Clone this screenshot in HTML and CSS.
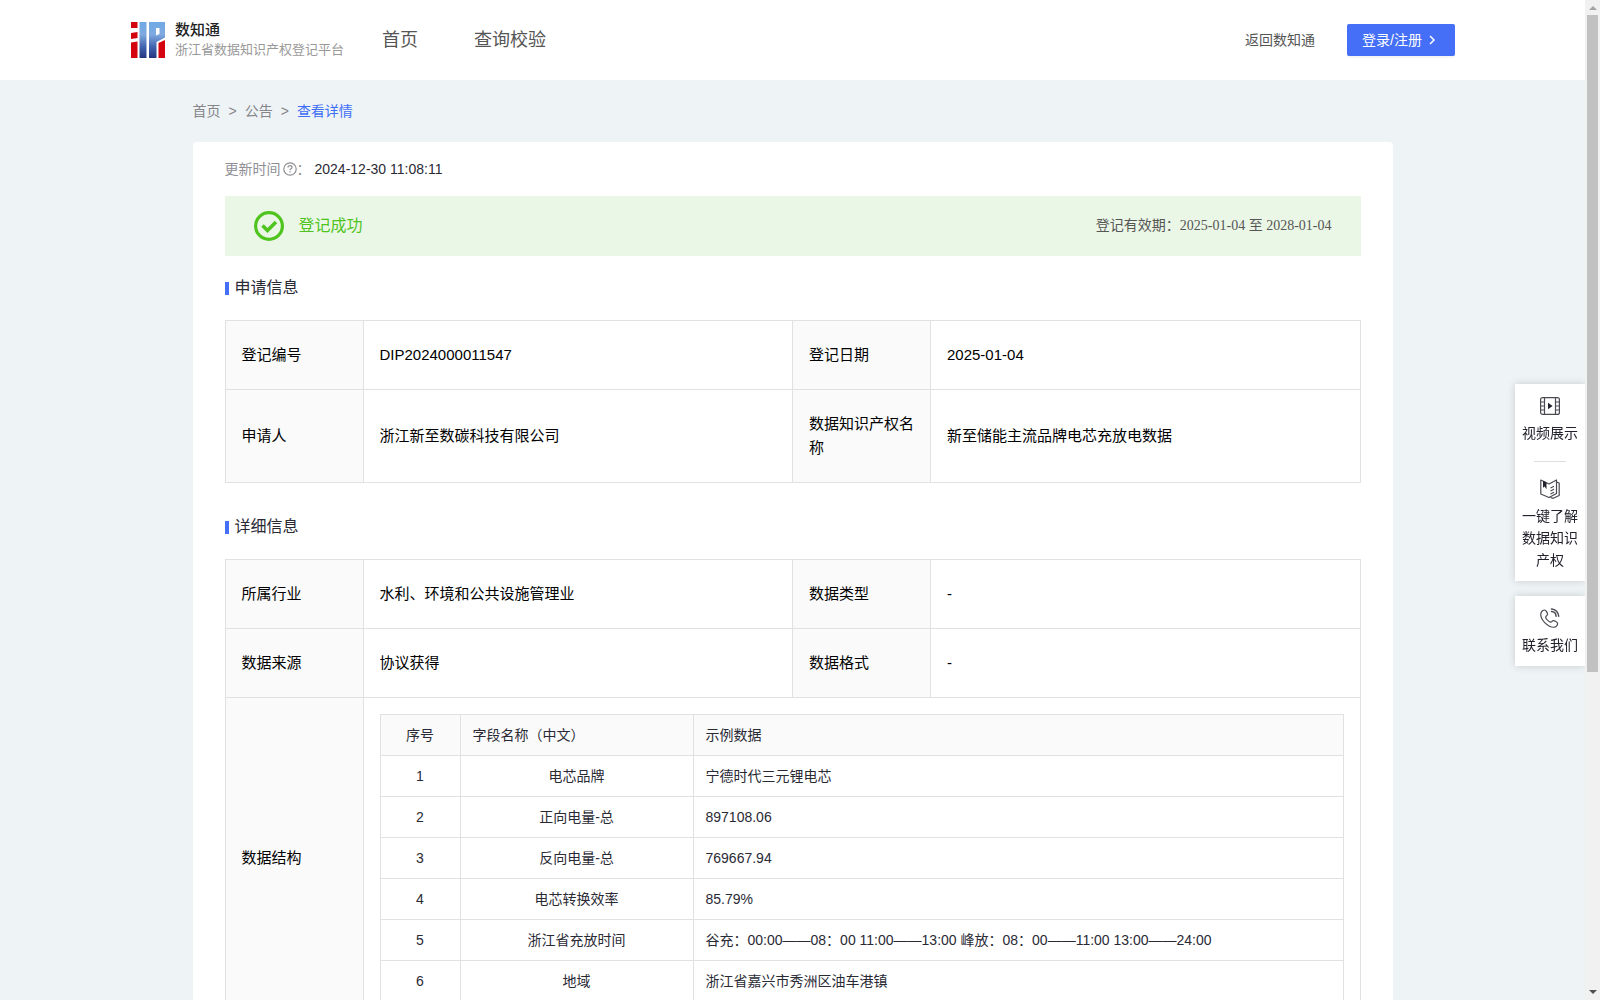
FILE: index.html
```html
<!DOCTYPE html>
<html lang="zh-CN">
<head>
  <meta charset="UTF-8">
  <meta name="viewport" content="width=device-width, initial-scale=1.0">
  <title>浙江省数据知识产权登记平台</title>
  <link rel="stylesheet" href="styles.css">
</head>
<body>
  <header class="header">
    <a class="logo" href="#">
      <svg class="logo-icon" width="34" height="36" viewBox="0 0 34 36">
        <defs>
          <linearGradient id="logoBlue" x1="0" y1="0" x2="0" y2="36" gradientUnits="userSpaceOnUse">
            <stop offset="0" stop-color="#6faae6"/>
            <stop offset="0.35" stop-color="#7fa9df"/>
            <stop offset="0.7" stop-color="#3f62ae"/>
            <stop offset="1" stop-color="#25357f"/>
          </linearGradient>
        </defs>
        <path fill="#d3040f" d="M0 0h6.500v6H0zM0 11l6.500-1v6L0 17zM0 20.500l6.500-1V36H0zM27.500 21l6.500-3v18h-6.500z"/>
        <path fill="url(#logoBlue)" d="M8.500 0h7v36h-7z"/>
        <path fill="url(#logoBlue)" fill-rule="evenodd" d="M18 0h16v15.500L25.500 20v16H18zM25 6v7.500l3.500-1.500V6z"/>
      </svg>
      <span class="logo-text">
        <strong class="logo-name">数知通</strong>
        <span class="logo-desc">浙江省数据知识产权登记平台</span>
      </span>
    </a>
    <nav class="nav">
      <a href="#">首页</a>
      <a href="#">查询校验</a>
    </nav>
    <div class="header-right">
      <a class="back-link" href="#">返回数知通</a>
      <button class="login-btn" type="button">
        登录/注册
        <svg width="12" height="12" viewBox="0 0 12 12"><path d="M4 2l4 4-4 4" fill="none" stroke="#fff" stroke-width="1.5"/></svg>
      </button>
    </div>
  </header>

  <main class="container">
    <nav class="breadcrumb">
      <a href="#">首页</a>
      <span>&gt;</span>
      <a href="#">公告</a>
      <span>&gt;</span>
      <a class="current" href="#">查看详情</a>
    </nav>

    <div class="card">
      <div class="update-time">
        <span class="label">更新时间</span>
        <svg width="14" height="14" viewBox="0 0 14 14" fill="none" stroke="#8f8f94" stroke-width="1.2">
          <circle cx="7" cy="7" r="6.2"/>
          <path d="M5 5.6c0-1.2.9-1.9 2-1.9s2 .7 2 1.7c0 1.3-2 1.4-2 2.8M7 9.3v1.3"/>
        </svg>
        <span class="label">：</span>
        <span class="time">2024-12-30 11:08:11</span>
      </div>

      <div class="status-bar">
        <svg width="32" height="32" viewBox="0 0 32 32" fill="none" stroke="#50c41e">
          <circle cx="16" cy="16" r="13.4" stroke-width="3.2"/>
          <path d="M9.5 15.5l5 5 8.5-8.5" stroke-width="3.6"/>
        </svg>
        <span class="status-text">登记成功</span>
        <span class="valid-date">登记有效期：2025-01-04 至 2028-01-04</span>
      </div>

      <h2 class="title">申请信息</h2>
      <table class="info-table">
        <colgroup><col class="col-label"><col><col class="col-label"><col></colgroup>
        <tr>
          <th>登记编号</th>
          <td>DIP2024000011547</td>
          <th>登记日期</th>
          <td>2025-01-04</td>
        </tr>
        <tr>
          <th>申请人</th>
          <td>浙江新至数碳科技有限公司</td>
          <th>数据知识产权名称</th>
          <td>新至储能主流品牌电芯充放电数据</td>
        </tr>
      </table>

      <h2 class="title title-next">详细信息</h2>
      <table class="info-table">
        <colgroup><col class="col-label"><col><col class="col-label"><col></colgroup>
        <tr>
          <th>所属行业</th>
          <td>水利、环境和公共设施管理业</td>
          <th>数据类型</th>
          <td>-</td>
        </tr>
        <tr>
          <th>数据来源</th>
          <td>协议获得</td>
          <th>数据格式</th>
          <td>-</td>
        </tr>
        <tr>
          <th>数据结构</th>
          <td class="nested" colspan="3">
            <table class="data-table">
              <colgroup><col class="col-no"><col class="col-name"><col></colgroup>
              <thead>
                <tr><th>序号</th><th>字段名称（中文）</th><th>示例数据</th></tr>
              </thead>
              <tbody>
                <tr><td>1</td><td>电芯品牌</td><td>宁德时代三元锂电芯</td></tr>
                <tr><td>2</td><td>正向电量-总</td><td>897108.06</td></tr>
                <tr><td>3</td><td>反向电量-总</td><td>769667.94</td></tr>
                <tr><td>4</td><td>电芯转换效率</td><td>85.79%</td></tr>
                <tr><td>5</td><td>浙江省充放时间</td><td>谷充：00:00——08：00 11:00——13:00 峰放：08：00——11:00 13:00——24:00</td></tr>
                <tr><td>6</td><td>地域</td><td>浙江省嘉兴市秀洲区油车港镇</td></tr>
              </tbody>
            </table>
          </td>
        </tr>
      </table>
    </div>
  </main>

  <aside class="side">
    <div class="side-box">
      <button class="side-item" type="button">
        <svg width="20" height="20" viewBox="0 0 20 20" fill="none" stroke="#4a4a52" stroke-width="1.2">
          <rect x="0.6" y="1.6" width="18.8" height="16.8" rx="2"/>
          <path d="M4.5 1.6v16.8M15.5 1.6v16.8M.6 6h3.9M.6 10h3.9M.6 14h3.9M15.5 6h3.9M15.5 10h3.9M15.5 14h3.9"/>
          <path d="M8 6.8v6.4l4.6-3.2z" fill="#22222c" stroke="none"/>
        </svg>
        视频展示
      </button>
      <span class="line"></span>
      <button class="side-item" type="button">
        <svg width="20" height="20" viewBox="0 0 20 20" fill="none" stroke="#4a4a52" stroke-width="1.2" stroke-linejoin="round">
          <path d="M.8 1l8.200 4 7.500-4v13.500L9 18.500.8 15z"/>
          <path d="M16.500 3.200l2.700.8v12.500l-6 2.800-2.700-.8"/>
          <path d="M10.500 9l3.500-1.700M10.500 12l3.500-1.700M10.500 15l3.500-1.700"/>
          <path d="M3 1.800v7l1.600-1.300 1.900 2.700V3.500z" fill="#22222c" stroke="none"/>
        </svg>
        一键了解数据知识产权
      </button>
    </div>
    <div class="side-box">
      <button class="side-item" type="button">
        <svg width="20" height="20" viewBox="0 0 20 20" fill="none" stroke="#4a4a52" stroke-width="1.2" stroke-linecap="round" stroke-linejoin="round">
          <path d="M5.2 2.2C3.9 1.5 1.6 3 1 5c-.8 3 1.400 7.200 4 9.800s6.400 4.800 9.400 4.400c2-.4 3.700-2.600 3-4.200-.7-1.400-3-2.600-4.100-2.400-1.300.2-1.500 1.900-2.900 1.500C8.500 13.500 6 11 5.700 9.300c-.2-1.400 1.600-1.500 1.800-2.800.1-1.200-1.200-3.700-2.300-4.300z"/>
          <path d="M11.500 1c4 .2 7 3.200 7.200 7.200M11.500 3.600c2.600.2 4.400 2 4.600 4.600" stroke-width="1.5"/>
        </svg>
        联系我们
      </button>
    </div>
  </aside>

  <div class="scrollbar" aria-hidden="true">
    <i class="arrow-up"></i>
    <i class="thumb"></i>
    <i class="arrow-down"></i>
  </div>
</body>
</html>
```

FILE: styles.css
```css
* {
  box-sizing: border-box;
}

body {
  margin: 0;
  padding-right: 15px;
  background: #eef3f6;
  color: #2a2a35;
  font-family: "Liberation Sans", "Noto Sans CJK SC", sans-serif;
  font-size: 14px;
  line-height: 22px;
}

a {
  color: inherit;
  text-decoration: none;
}

button {
  border: none;
  font-family: inherit;
  font-size: 14px;
  line-height: 22px;
  cursor: pointer;
}

/* header */
.header {
  display: flex;
  align-items: center;
  height: 80px;
  padding: 0 130px 0 131px;
  background: #fff;
  color: #555;
}

.logo {
  display: flex;
  align-items: center;
  gap: 10px;
}

.logo-text {
  display: flex;
  flex-direction: column;
}

.logo-name {
  color: #222;
  font-size: 15px;
  font-weight: 500;
  line-height: 20px;
}

.logo-desc {
  color: #999;
  font-size: 13px;
  line-height: 20px;
}

.nav {
  display: flex;
  gap: 56px;
  margin-left: 38px;
  font-size: 18px;
}

.header-right {
  display: flex;
  align-items: center;
  gap: 32px;
  margin-left: auto;
}

.login-btn {
  display: flex;
  align-items: center;
  gap: 4px;
  height: 32px;
  padding: 0 17px 0 15px;
  border-radius: 2px;
  background: #446ff6;
  box-shadow: 0 2px 0 rgba(0, 0, 0, 0.04);
  color: #fff;
}

/* content */
.container {
  max-width: 1200px;
  margin: 0 auto;
}

.breadcrumb {
  display: flex;
  align-items: center;
  gap: 8px;
  height: 62px;
  color: #86868a;
}

.breadcrumb .current {
  color: #3f6ef6;
}

.card {
  padding: 0 32px 32px;
  border-radius: 4px;
  background: #fff;
}

.update-time {
  display: flex;
  align-items: center;
  height: 54px;
}

.update-time .label {
  color: #8f8f94;
}

.update-time svg {
  margin-left: 2px;
}

.update-time .time {
  margin-left: 4px;
}

.status-bar {
  display: flex;
  align-items: center;
  height: 60px;
  padding: 0 29px 0 28px;
  background: #ebf7e6;
}

.status-text {
  margin-left: 14px;
  color: #50c41e;
  font-size: 16px;
}

.valid-date {
  margin-left: auto;
  color: #555;
  font-family: "Liberation Serif", "Noto Sans CJK SC", serif;
}

.title {
  display: flex;
  align-items: center;
  gap: 6px;
  height: 64px;
  margin: 0;
  font-size: 16px;
  font-weight: 400;
}

.title::before {
  content: "";
  width: 4px;
  height: 13px;
  background: #446ff6;
}

.title-next {
  margin-top: 12px;
}

/* tables */
table {
  width: 100%;
  border-collapse: collapse;
  table-layout: fixed;
}

th,
td {
  border: 1px solid #e1e1e1;
  font-weight: 400;
  text-align: left;
}

th {
  background: #fafafa;
}

.info-table {
  color: #000;
  font-size: 15px;
  line-height: 24px;
}

.info-table th,
.info-table td {
  padding: 22px 16px;
}

.col-label {
  width: 138px;
}

.info-table .nested {
  padding: 16px;
}

.data-table {
  color: #2a2a35;
  font-size: 14px;
  line-height: 22px;
}

.info-table .data-table th,
.info-table .data-table td {
  padding: 9px 12px;
}

.col-no {
  width: 80px;
}

.col-name {
  width: 233px;
}

.data-table th:first-child,
.data-table td:first-child,
.data-table td:nth-child(2) {
  text-align: center;
}

/* floating tools */
.side {
  position: fixed;
  top: 384px;
  right: 15px;
  display: flex;
  flex-direction: column;
  gap: 15px;
  width: 70px;
}

.side-box {
  display: flex;
  flex-direction: column;
  align-items: center;
  padding: 12px 0 10px;
  background: #fff;
  box-shadow: 0 0 8px rgba(0, 0, 0, 0.16);
}

.side-item {
  display: flex;
  flex-direction: column;
  align-items: center;
  gap: 6px;
  width: 100%;
  padding: 0 7px;
  background: none;
  color: #22222c;
}

.side-box .line {
  width: 32px;
  height: 1px;
  margin: 17px 0;
  background: #ddd;
}

/* scrollbar */
.scrollbar {
  position: fixed;
  top: 0;
  right: 0;
  bottom: 0;
  display: flex;
  flex-direction: column;
  align-items: center;
  width: 15px;
  padding: 6px 0;
  background: #f1f1f1;
}

.arrow-up,
.arrow-down {
  border: 4px solid transparent;
  border-top-width: 0;
  border-bottom: 4px solid #a3a3a3;
}

.arrow-down {
  margin-top: auto;
  border-top: 4px solid #505050;
  border-bottom-width: 0;
}

.thumb {
  width: 11px;
  height: calc(66% + 5px);
  margin-top: 5px;
  background: #c1c1c1;
}
```
